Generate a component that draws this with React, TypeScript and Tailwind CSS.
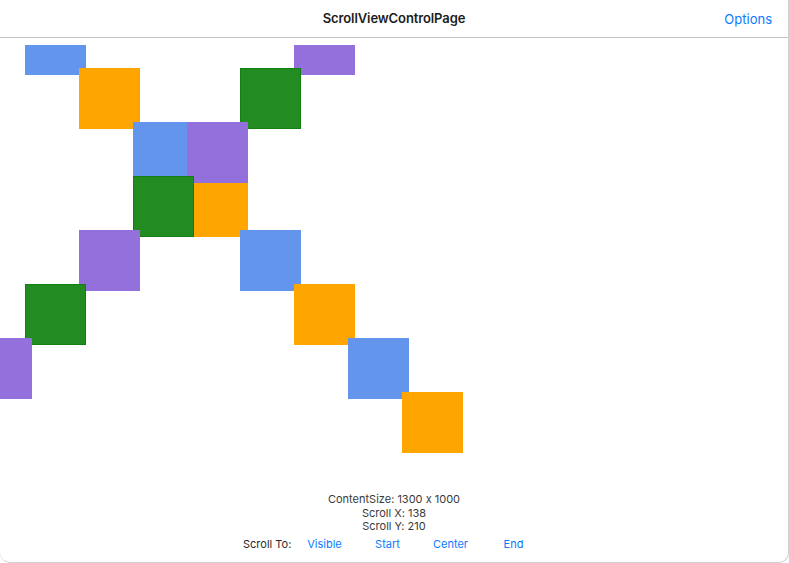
import React from 'react';

type Box = { row: number; col: number; color: string };

// grid step ~54px, boxes 61px, origin shifted by the current scroll offset
const diagonalA: Box[] = [
  { row: 0, col: 1, color: 'bg-[#6495ED]' },
  { row: 1, col: 2, color: 'bg-[#FFA500]' },
  { row: 2, col: 3, color: 'bg-[#6495ED]' },
  { row: 3, col: 4, color: 'bg-[#FFA500]' },
  { row: 4, col: 5, color: 'bg-[#6495ED]' },
  { row: 5, col: 6, color: 'bg-[#FFA500]' },
  { row: 6, col: 7, color: 'bg-[#6495ED]' },
  { row: 7, col: 8, color: 'bg-[#FFA500]' },
];

const diagonalB: Box[] = [
  { row: 0, col: 6, color: 'bg-[#9370DB]' },
  { row: 1, col: 5, color: 'bg-[#228B22] border border-[#118011]' },
  { row: 2, col: 4, color: 'bg-[#9370DB]' },
  { row: 3, col: 3, color: 'bg-[#228B22] border border-[#118011]' },
  { row: 4, col: 2, color: 'bg-[#9370DB]' },
  { row: 5, col: 1, color: 'bg-[#228B22] border border-[#118011]' },
  { row: 6, col: 0, color: 'bg-[#9370DB]' },
];

const buttons = ['Visible', 'Start', 'Center', 'End'];

const App: React.FC = () => {
  const font = { fontFamily: 'Inter, "Liberation Sans", sans-serif' };

  return (
    <div
      className="w-[789px] h-[563px] bg-white flex flex-col overflow-hidden rounded-b-[10px] border-b border-r border-[#d0d0d0] [font-feature-settings:'calt'_0]"
      style={font}
    >
      <div className="h-[38px] shrink-0 flex items-center justify-center relative border-b border-[#c6c6c6]">
        <span className="text-[13px] font-semibold text-[#1c1c1c] tracking-[-0.1px]">ScrollViewControlPage</span>
        <span className="absolute right-[16px] top-[10px] text-[13px] text-[#0a7aff]">Options</span>
      </div>

      <div className="h-[7px] shrink-0" />

      <div className="relative h-[440px] shrink-0 overflow-hidden">
        {[...diagonalA, ...diagonalB].map((b, i) => (
          <div
            key={i}
            className={`absolute w-[61px] h-[61px] ${b.color}`}
            style={{ left: Math.round(-28.9 + b.col * 53.86), top: -31 + b.row * 54 }}
          />
        ))}
      </div>

      <div className="flex flex-col items-center text-[11px] leading-[13.5px] text-[#3a3a3a] mt-[8px]">
        <span>ContentSize: 1300 x 1000</span>
        <span>Scroll X: 138</span>
        <span>Scroll Y: 210</span>
      </div>

      <div className="flex items-center justify-center mt-[3px] text-[11px] leading-[14px]">
        <span className="text-[#2a2a2a] w-[50px]">Scroll To:</span>
        {buttons.map((b) => (
          <span key={b} className="w-[63px] text-center text-[#0a7aff]">
            {b}
          </span>
        ))}
      </div>
    </div>
  );
};

export default App;
